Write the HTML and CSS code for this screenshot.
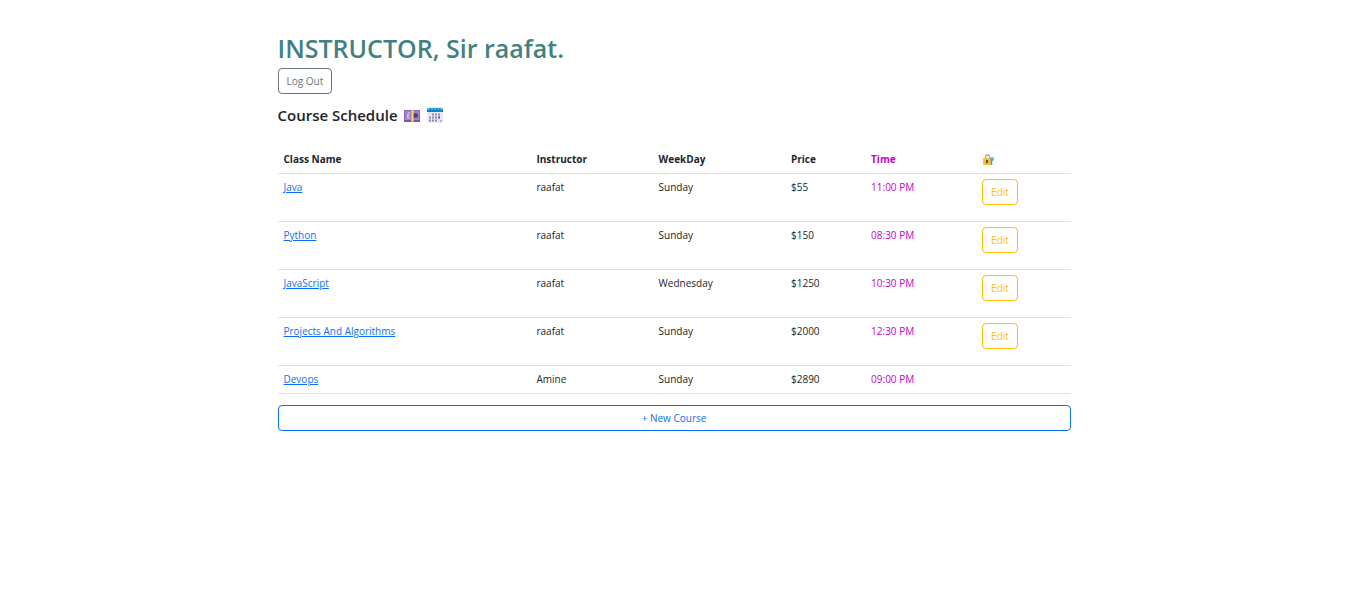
FILE: index.html
```html
<!DOCTYPE html>
<html lang="en">
<head>
<meta charset="utf-8">
<meta name="viewport" content="width=device-width, initial-scale=1">
<title>Course Schedule</title>
<link rel="stylesheet" href="styles.css">
</head>
<body>
<main class="container">
  <h1 class="welcome">INSTRUCTOR, Sir raafat.</h1>
  <button type="button" class="btn btn-secondary">Log Out</button>
  <h2 class="subtitle">
    <span>Course Schedule</span>
    <svg class="emoji" viewBox="0 0 18 18" aria-hidden="true">
      <rect x="1" y="4" width="16" height="12" rx="1" fill="#8766b4"/>
      <rect x="2" y="5" width="14" height="9" fill="#9f84cd"/>
      <path d="M1 14.500h16v1.500H1z" fill="#70529b"/>
      <circle cx="12.500" cy="9.500" r="2.500" fill="#59417f"/>
      <path d="M7 7q-2-1-2 1v3l-1 1h3M4 9.500h2" fill="none" stroke="#d9caef"/>
      <path d="M8.500 4h2v12h-2z" fill="#f8d85b"/>
      <path d="M8.500 14h2v2h-2z" fill="#eebd39"/>
    </svg>
    <svg class="emoji" viewBox="0 0 18 18" aria-hidden="true">
      <path d="M1 4h16v10l-3 3H3q-2 0-2-2z" fill="#eae7f3"/>
      <path d="M14 17v-3h3z" fill="#b8abc9"/>
      <path d="M1 6V4q0-2 2-2h12q2 0 2 2v2z" fill="#0786ce"/>
      <path d="M3 1v3M6 1v3M9 1v3M12 1v3M15 1v3" stroke="#a9c7de"/>
      <path d="M6 8.500h9M3 11.500h12M3 14.500h9" stroke="#8f8ab0" stroke-width="2" stroke-dasharray="2 1"/>
      <path d="M12 10.500h2v2h-2z" fill="#1688d0"/>
    </svg>
  </h2>
  <table class="schedule">
    <colgroup>
      <col class="col-name"><col class="col-instructor"><col class="col-day"><col class="col-price"><col class="col-time"><col>
    </colgroup>
    <thead>
      <tr>
        <th scope="col">Class Name</th><th scope="col">Instructor</th><th scope="col">WeekDay</th><th scope="col">Price</th><th scope="col" class="time">Time</th>
        <th scope="col" aria-label="Actions">
          <svg class="lock" viewBox="0 0 13 13" aria-hidden="true">
            <path d="M3.500 6V4q0-2 2-2t2 2v2" fill="none" stroke="#a6a2ad" stroke-width="1.300"/>
            <rect x="1" y="5" width="8" height="7" rx="1" fill="#f5bf3a"/>
            <path d="M4 7h2v3H4z" fill="#65502f"/>
            <circle cx="10" cy="6" r="2" fill="#55b5cc"/>
            <path d="M9.500 7v5" stroke="#5d9aaa" stroke-width="1.500"/>
            <path d="M7 5h2" stroke="#8ad1df"/>
          </svg>
        </th>
      </tr>
    </thead>
    <tbody>
      <tr><td><a href="#java">Java</a></td><td>raafat</td><td>Sunday</td><td>$55</td><td class="time">11:00 PM</td><td class="actions"><button type="button" class="btn btn-warning">Edit</button></td></tr>
      <tr><td><a href="#python">Python</a></td><td>raafat</td><td>Sunday</td><td>$150</td><td class="time">08:30 PM</td><td class="actions"><button type="button" class="btn btn-warning">Edit</button></td></tr>
      <tr><td><a href="#javascript">JavaScript</a></td><td>raafat</td><td>Wednesday</td><td>$1250</td><td class="time">10:30 PM</td><td class="actions"><button type="button" class="btn btn-warning">Edit</button></td></tr>
      <tr><td><a href="#algorithms">Projects And Algorithms</a></td><td>raafat</td><td>Sunday</td><td>$2000</td><td class="time">12:30 PM</td><td class="actions"><button type="button" class="btn btn-warning">Edit</button></td></tr>
      <tr><td><a href="#devops">Devops</a></td><td>Amine</td><td>Sunday</td><td>$2890</td><td class="time">09:00 PM</td><td></td></tr>
    </tbody>
  </table>
  <button type="button" class="btn btn-primary">+ New Course</button>
</main>
</body>
</html>
```
FILE: styles.css
```css
* {
  box-sizing: border-box;
}

body {
  margin: 0;
  background: #fff;
  color: #212529;
  font-family: "Segoe UI", "Open Sans", "Noto Sans", sans-serif;
  font-size: 10px;
  line-height: 17px;
}

.container {
  width: 100%;
  max-width: 825px;
  margin: 0 auto;
  padding: 32px 16px;
}

.welcome {
  margin: 0 0 4px;
  color: #438080;
  font-size: 25px;
  font-weight: 600;
  line-height: 32px;
}

.subtitle {
  display: flex;
  align-items: center;
  gap: 5px;
  margin: 11px 0 21px;
  font-size: 15px;
  font-weight: 600;
  line-height: 20px;
}

.emoji {
  width: 18px;
  height: 18px;
}

.lock {
  display: block;
  width: 13px;
  height: 13px;
}

.schedule {
  width: 100%;
  margin-bottom: 11px;
  border-collapse: separate;
  border-spacing: 0;
  table-layout: fixed;
}

.col-name { width: 31.9%; }
.col-instructor { width: 15.4%; }
.col-day { width: 16.7%; }
.col-price { width: 10.1%; }
.col-time { width: 14%; }

th,
td {
  padding: 5px 6px;
  border-bottom: 1px solid #dee2e6;
  text-align: left;
  vertical-align: top;
}

th {
  font-weight: 700;
  vertical-align: middle;
}

.time {
  color: #c800c8;
}

.actions {
  padding-bottom: 16px;
}

a {
  color: #0d6efd;
  text-decoration: underline;
}

.btn {
  display: block;
  padding: 4px 8px;
  border: 1px solid;
  border-radius: 4px;
  background: transparent;
  font: inherit;
  line-height: 16px;
  cursor: pointer;
}

.btn-secondary { color: #6c757d; }
.btn-warning { color: #ffc107; }

.btn-primary {
  width: 100%;
  color: #0d6efd;
}
```
